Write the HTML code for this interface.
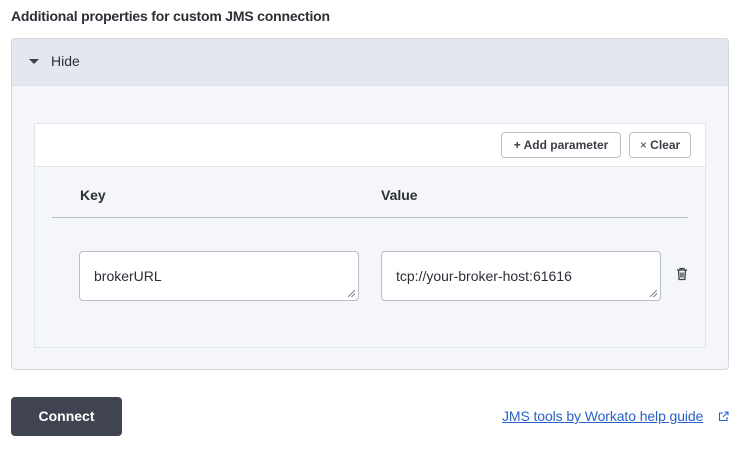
<!DOCTYPE html>
<html><head><style>
*{box-sizing:border-box;margin:0;padding:0}
body{width:743px;height:449px;background:#fff;font-family:"Liberation Sans",sans-serif;color:#2b2f36;position:relative;overflow:hidden}
.a{position:absolute}
.title{left:11px;top:8px;font-size:14px;font-weight:bold;color:#2b2f36;letter-spacing:-0.2px}
.panel{left:11px;top:38px;width:718px;height:332px;border:1px solid #d3d8df;border-radius:4px;background:#f4f6f9;overflow:hidden}
.hdr{left:0;top:0;width:716px;height:47px;background:#e4e8ee;border-bottom:1px solid #dde1e7}
.card{left:22px;top:84px;width:672px;height:225px;border:1px solid #e2e6eb;background:#f4f6f9}
.bar{left:0;top:0;width:670px;height:43px;background:#fff;border-bottom:1px solid #e2e6eb}
.btn{border:1px solid #b9bfc8;border-radius:4px;background:#fff;font-size:12px;font-weight:bold;height:26px;line-height:24px;color:#3a3f48;text-align:center}
.lbl{font-size:14px;font-weight:bold;color:#2b2f36}
.inp{height:50px;border:1px solid #b9bfc8;border-radius:4px;background:#fff;font-size:14px;padding:16px 14px;color:#2b2f36}
.grip{position:absolute;right:3px;bottom:3px;width:7px;height:7px;background:linear-gradient(135deg,transparent 45%,#888 45%,#888 55%,transparent 55%,transparent 70%,#888 70%,#888 80%,transparent 80%)}
</style></head><body>
<div class="a title">Additional properties for custom JMS connection</div>
<div class="a panel">
 <div class="a hdr">
  <div class="a" style="left:17px;top:20px;width:0;height:0;border-left:5px solid transparent;border-right:5px solid transparent;border-top:5px solid #3a3f48"></div>
  <div class="a" style="left:39px;top:14px;font-size:14px;color:#2b2f36">Hide</div>
 </div>
 <div class="a card">
  <div class="a bar">
   <div class="a btn" style="left:466px;top:8px;width:120px">+ Add parameter</div>
   <div class="a btn" style="left:594px;top:8px;width:62px"><span style="font-weight:normal">×</span> Clear</div>
  </div>
  <div class="a lbl" style="left:45px;top:63px">Key</div>
  <div class="a lbl" style="left:346px;top:63px">Value</div>
  <div class="a" style="left:17px;top:93px;width:636px;height:1px;background:#b9bfc8"></div>
  <div class="a inp" style="left:44px;top:127px;width:280px">brokerURL<div class="grip"></div></div>
  <div class="a inp" style="left:346px;top:127px;width:280px">tcp://your-broker-host:61616<div class="grip"></div></div>
  <svg class="a" style="left:641px;top:143px" width="12" height="14" viewBox="0 0 12 14" fill="none" stroke="#3a3f48" stroke-width="1.3"><path d="M1 3h10M4 3V1.5h4V3M2.5 3l.6 9.5h5.8L9.5 3M5 5.5v5M7 5.5v5"/></svg>
 </div>
</div>
<div class="a" style="left:11px;top:397px;width:111px;height:39px;background:#3f4450;border-radius:4px;color:#fff;font-weight:bold;font-size:14px;text-align:center;line-height:39px">Connect</div>
<div class="a" style="left:502px;top:408px;font-size:14px;color:#2a62c9;text-decoration:underline;letter-spacing:-0.1px">JMS tools by Workato help guide</div>
<svg class="a" style="left:718px;top:411px" width="11" height="11" viewBox="0 0 11 11" fill="none" stroke="#2a62c9" stroke-width="1.1"><path d="M5 2H1.5v7.5H9V6M6.5 1H10v3.5M10 1L5 6"/></svg>
</body></html>
